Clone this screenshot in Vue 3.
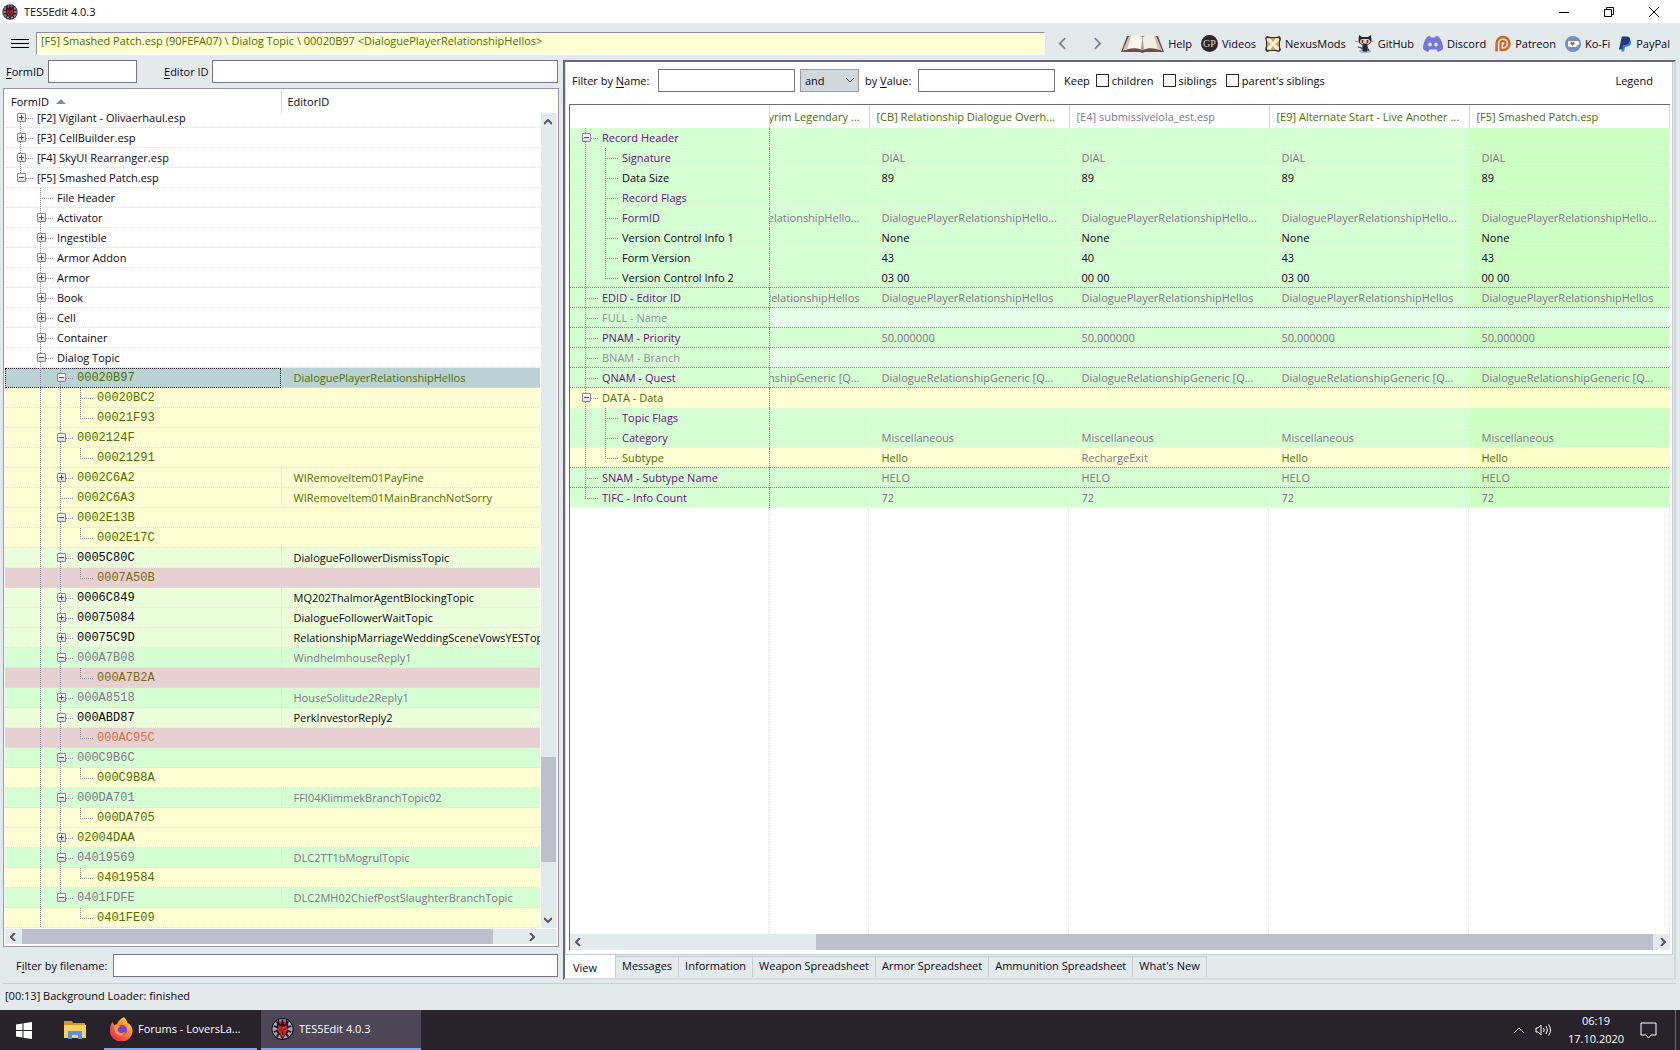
<script setup>
import { ref } from 'vue'

const formId = ref('')
const editorId = ref('')
const fileFilter = ref('')
const nameFilter = ref('')
const valueFilter = ref('')
const joinMode = ref('and')

// g: guide per level (v = line through, t = tee, l = corner, space = empty)
// x: expander state, tone: row colours
const tree = [
  { g: 't', x: '+', a: '[F2] Vigilant - Olivaerhaul.esp' },
  { g: 't', x: '+', a: '[F3] CellBuilder.esp' },
  { g: 't', x: '+', a: '[F4] SkyUI Rearranger.esp' },
  { g: 'l', x: '-', a: '[F5] Smashed Patch.esp' },
  { g: ' t', a: 'File Header' },
  { g: ' t', x: '+', a: 'Activator' },
  { g: ' t', x: '+', a: 'Ingestible' },
  { g: ' t', x: '+', a: 'Armor Addon' },
  { g: ' t', x: '+', a: 'Armor' },
  { g: ' t', x: '+', a: 'Book' },
  { g: ' t', x: '+', a: 'Cell' },
  { g: ' t', x: '+', a: 'Container' },
  { g: ' t', x: '-', a: 'Dialog Topic' },
  { g: ' vt', x: '-', a: '00020B97', b: 'DialoguePlayerRelationshipHellos', tone: 'selected' },
  { g: ' vvt', a: '00020BC2', tone: 'yellow' },
  { g: ' vvl', a: '00021F93', tone: 'yellow' },
  { g: ' vt', x: '-', a: '0002124F', tone: 'yellow' },
  { g: ' vvl', a: '00021291', tone: 'yellow' },
  { g: ' vt', x: '+', a: '0002C6A2', b: 'WIRemoveItem01PayFine', tone: 'yellow' },
  { g: ' vt', a: '0002C6A3', b: 'WIRemoveItem01MainBranchNotSorry', tone: 'yellow' },
  { g: ' vt', x: '-', a: '0002E13B', tone: 'yellow' },
  { g: ' vvl', a: '0002E17C', tone: 'yellow' },
  { g: ' vt', x: '-', a: '0005C80C', b: 'DialogueFollowerDismissTopic', tone: 'lime' },
  { g: ' vvl', a: '0007A50B', tone: 'pink' },
  { g: ' vt', x: '+', a: '0006C849', b: 'MQ202ThalmorAgentBlockingTopic', tone: 'lime' },
  { g: ' vt', x: '+', a: '00075084', b: 'DialogueFollowerWaitTopic', tone: 'lime' },
  { g: ' vt', x: '+', a: '00075C9D', b: 'RelationshipMarriageWeddingSceneVowsYESTopic', tone: 'lime' },
  { g: ' vt', x: '-', a: '000A7B08', b: 'WindhelmhouseReply1', tone: 'green' },
  { g: ' vvl', a: '000A7B2A', tone: 'pink' },
  { g: ' vt', x: '+', a: '000A8518', b: 'HouseSolitude2Reply1', tone: 'green' },
  { g: ' vt', x: '-', a: '000ABD87', b: 'PerkInvestorReply2', tone: 'lime' },
  { g: ' vvl', a: '000AC95C', tone: 'pink orange' },
  { g: ' vt', x: '-', a: '000C9B6C', tone: 'green' },
  { g: ' vvl', a: '000C9B8A', tone: 'yellow' },
  { g: ' vt', x: '-', a: '000DA701', b: 'FFI04KlimmekBranchTopic02', tone: 'green' },
  { g: ' vvl', a: '000DA705', tone: 'yellow' },
  { g: ' vt', x: '+', a: '02004DAA', tone: 'yellow' },
  { g: ' vt', x: '-', a: '04019569', b: 'DLC2TT1bMogrulTopic', tone: 'green' },
  { g: ' vvl', a: '04019584', tone: 'yellow' },
  { g: ' vl', x: '-', a: '0401FDFE', b: 'DLC2MH02ChiefPostSlaughterBranchTopic', tone: 'green' },
  { g: ' v l', a: '0401FE09', tone: 'yellow' },
]

const columns = [
  { t: 'Skyrim Legendary ...', c: 'win' },
  { t: '[CB] Relationship Dialogue Overh...', c: 'win' },
  { t: '[E4] submissivelola_est.esp', c: 'mute' },
  { t: '[E9] Alternate Start - Live Another ...', c: 'win' },
  { t: '[F5] Smashed Patch.esp', c: 'win' },
]

const four = (s) => ['', s, s, s, s]
const five = (s) => [s, s, s, s, s]
const record = [
  { g: 't', x: '-', n: 'Record Header', c: 'same', v: four('') },
  { g: 'vt', n: 'Signature', c: 'same', v: four('DIAL') },
  { g: 'vt', n: 'Data Size', c: 'plain', v: four('89') },
  { g: 'vt', n: 'Record Flags', c: 'same', v: four('') },
  { g: 'vt', n: 'FormID', c: 'same', v: five('DialoguePlayerRelationshipHello...') },
  { g: 'vt', n: 'Version Control Info 1', c: 'plain', v: four('None') },
  { g: 'vt', n: 'Form Version', c: 'plain', v: ['', '43', '40', '43', '43'] },
  { g: 'vl', n: 'Version Control Info 2', c: 'plain', v: ['', '03 00', '00 00', '03 00', '00 00'], dark: true },
  { g: 't', n: 'EDID - Editor ID', c: 'same', v: five('DialoguePlayerRelationshipHellos'), dark: true },
  { g: 't', n: 'FULL - Name', c: 'absent', v: four(''), dark: true },
  { g: 't', n: 'PNAM - Priority', c: 'same', v: four('50.000000'), dark: true },
  { g: 't', n: 'BNAM - Branch', c: 'absent', v: four(''), dark: true },
  { g: 't', n: 'QNAM - Quest', c: 'same', v: five('DialogueRelationshipGeneric [Q...'), dark: true },
  { g: 't', x: '-', n: 'DATA - Data', c: 'conflict', v: four('') },
  { g: 'vt', n: 'Topic Flags', c: 'same', v: four('') },
  { g: 'vt', n: 'Category', c: 'same', v: four('Miscellaneous') },
  { g: 'vl', n: 'Subtype', c: 'conflict', v: ['', 'Hello', 'RechargeExit', 'Hello', 'Hello'], dark: true },
  { g: 't', n: 'SNAM - Subtype Name', c: 'same', v: four('HELO'), dark: true },
  { g: 'l', n: 'TIFC - Info Count', c: 'same', v: four('72') },
]

const tabs = ['View', 'Messages', 'Information', 'Weapon Spreadsheet', 'Armor Spreadsheet', 'Ammunition Spreadsheet', "What's New"]
const guide = (ch) => ({ v: 'gv', t: 'gt', l: 'gl' })[ch] || ''
</script>

<template>
  <div class="screen">
    <header class="titlebar">
      <svg class="appicon" viewBox="0 0 24 24"><circle cx="12" cy="12" r="11.500" fill="#3b3544" /><circle cx="12" cy="12" r="10" fill="#8f919c" /><path d="M12 2v20M3 9l18 6M3 15l18-6M6 4l12 16M18 4L6 20" stroke="#2a2430" stroke-width="2" /><path d="M8 2l1 4 3-2 3 2 1-4 2 6-1 5 1 3-3 2-3 4-3-4-3-2 1-3-1-5z" fill="#2b0f1a" /><path d="M8 8l4 2 4-2 1 5-2 4-3 3-3-3-2-4z" fill="#c21c2c" /><path d="M9 3l1 4M15 3l-1 4" stroke="#a02858" stroke-width="1.500" /><path d="M9 12l2 1M15 12l-2 1M12 14v4" stroke="#2b0c18" stroke-width="1.500" /></svg>
      <span class="apptitle">TES5Edit 4.0.3</span>
      <div class="winbtns">
        <button aria-label="Minimize"><svg viewBox="0 0 12 12"><path d="M1 6.500h10" /></svg></button>
        <button aria-label="Restore"><svg viewBox="0 0 12 12"><path d="M1.500 3.500h7v7h-7zM3.500 3.500v-2h7v7h-2" /></svg></button>
        <button aria-label="Close"><svg viewBox="0 0 12 12"><path d="M1 1l10 10M11 1L1 11" /></svg></button>
      </div>
    </header>

    <nav class="toolbar">
      <button class="burger" aria-label="Menu"><i></i><i></i><i></i></button>
      <div class="address">[F5] Smashed Patch.esp (90FEFA07) \ Dialog Topic \ 00020B97 &lt;DialoguePlayerRelationshipHellos&gt;</div>
      <button class="navbtn" aria-label="Back"><svg viewBox="0 0 10 14"><path d="M8 1L2 7l6 6" /></svg></button>
      <button class="navbtn" aria-label="Forward"><svg viewBox="0 0 10 14"><path d="M2 1l6 6-6 6" /></svg></button>
      <div class="links">
        <a href="#help"><svg width="43" height="18" viewBox="0 0 43 18"><path d="M6 1L0 17h19l2.500 1 2.500-1h19L37 1z" fill="#6b514a" /><path d="M8 1.500C13 0 18 0 21.500 2v13C15 12 8 13 2 15.500z" fill="#f7f4ee" /><path d="M35 1.500C30 0 25 0 21.500 2v13c6-3 13-2 19.500.500z" fill="#f1ede5" /><path d="M21.500 2L20 14.500l1.500.500 1.500-.500z" fill="#a99c92" /><path d="M8 1.500L2 15.500l4-1.200L10 1zM35 1.500l6 14-4-1.200L33 1z" fill="#cdbfb0" /></svg>Help</a>
        <a href="#videos"><svg width="17" height="17" viewBox="0 0 17 17"><circle cx="8.500" cy="8.500" r="8.500" fill="#2c2630" /><text x="8.500" y="12" text-anchor="middle" font-size="10" font-family="Liberation Serif, serif" fill="#e0d4ae">GP</text></svg>Videos</a>
        <a href="#nexus"><svg width="16" height="16" viewBox="0 0 16 16"><path d="M2 0l4 1h5l4-1 1 3-1 3v5l1 3-2 2-4-1H5l-3 1-2-2 1-4V5L0 2z" fill="#3c3033" /><path d="M2 2h12v12H2z" fill="#d99a3c" /><path d="M1.500 2L6 3l2 3 3-4 3.500 1L13 6l-3 2 4 3-.500 3.500L10 13 8 10l-3 4-3-1 1-3 3-2-4-3z" fill="#f6efe2" /></svg>NexusMods</a>
        <a href="#github"><svg width="19" height="18" viewBox="0 0 19 18"><ellipse cx="10" cy="16" rx="6" ry="2" fill="#8fb9d8" /><path d="M4 0l3 2h6l3-2 .500 5c0 4-3 5-6.500 5S3.500 9 3.500 5z" fill="#2b2533" /><rect x="5" y="4" width="10" height="5" rx="2.500" fill="#eccfbd" /><path d="M7.500 5v3M12.500 5v3" stroke="#4a2c30" stroke-width="1.500" /><path d="M8 9h4v7H8zM8 13c-2 1-3-1-5-1M12 12l2 4" fill="#2b2533" stroke="#2b2533" /><path d="M0 6l4 1M19 6l-4 1" stroke="#9d939c" /></svg>GitHub</a>
        <a href="#discord"><svg width="20" height="16" viewBox="0 0 20 16"><path d="M4 1Q6 0 7 0l1 1.500h4L13 0q2 0 3 1 4 5 4 12-2 2-5 3l-1.500-2.500h-7L5 16q-3-1-5-3Q0 6 4 1z" fill="#7277d8" /><ellipse cx="7" cy="8.500" rx="1.700" ry="2" fill="#e9edf3" /><ellipse cx="13" cy="8.500" rx="1.700" ry="2" fill="#e9edf3" /></svg>Discord</a>
        <a href="#patreon"><svg width="16" height="17" viewBox="0 0 16 17"><path d="M1.500 16.500V8.500a6.500 6.500 0 1 1 6.500 6.500q-2 0-3-.800" fill="none" stroke="#d5601c" stroke-width="2.400" /><path d="M5.500 15V8.500a2.500 2.500 0 1 1 2.500 2.500" fill="none" stroke="#d5601c" stroke-width="2" /></svg>Patreon</a>
        <a href="#kofi"><svg width="16" height="16" viewBox="0 0 16 16"><circle cx="8" cy="8" r="8" fill="#6d92c4" /><path d="M3 5h9q2.500 0 2.500 2t-2.500 2.500L11 11H5q-2 0-2-2z" fill="#fff" /><path d="M7.500 9.800L5.400 7.600q-.400-1.600 1-1.600.800 0 1.100.600.300-.600 1.100-.600 1.400 0 1 1.600z" fill="#d8404e" /></svg>Ko-Fi</a>
        <a href="#paypal"><svg width="13" height="16" viewBox="0 0 14 16"><path d="M5 3h6q3 2 1.500 5.500Q11 11 8 11H6.500L5.500 16H2.500z" fill="#2a8fd0" /><path d="M3 0h6q3.500.500 3 4T8 9H4.500L3.500 14H0z" fill="#27387c" /></svg>PayPal</a>
      </div>
    </nav>

    <main class="work">
      <section class="left">
        <div class="idrow">
          <label for="fid"><u>F</u>ormID</label><input id="fid" v-model="formId" class="fid" type="text" />
          <label for="eid" class="eidlab"><u>E</u>ditor ID</label><input id="eid" v-model="editorId" class="grow" type="text" />
        </div>
        <div class="panel">
          <table class="tree">
            <colgroup><col class="c1" /><col /><col class="sb" /></colgroup>
            <thead><tr><th>FormID<svg width="10" height="5" viewBox="0 0 10 5"><path d="M5 0l5 5H0z" fill="#8f8899" /></svg></th><th colspan="2">EditorID</th></tr></thead>
            <tbody>
              <tr v-for="(r, i) in tree" :key="i" :class="[r.tone || 'none', { cut: i === 0, mono: r.tone }]">
                <td class="node"><div class="cell">
                  <span v-for="(ch, k) in r.g" :key="k" class="g" :class="guide(ch)"><button v-if="r.x && k === r.g.length - 1" class="exp" :class="{ plus: r.x === '+' }" :aria-label="r.x === '+' ? 'Expand' : 'Collapse'"></button></span>
                  <span class="txt">{{ r.a }}</span>
                </div></td>
                <td class="ed" :class="{ has: r.b }"><div class="cell"><span class="txt">{{ r.b }}</span></div></td>
                <td v-if="i === 0" class="vbar" :rowspan="tree.length"><div class="vtrack">
                  <svg width="8" height="6" viewBox="0 0 8 6"><path d="M0 5l4-4 4 4" /></svg>
                  <i class="above"></i><i class="vthumb"></i><i class="below"></i>
                  <svg width="8" height="6" viewBox="0 0 8 6"><path d="M0 1l4 4 4-4" /></svg>
                </div></td>
              </tr>
            </tbody>
          </table>
          <div class="hbar lefth">
            <svg width="6" height="8" viewBox="0 0 6 8"><path d="M5 0L1 4l4 4" /></svg><i class="hthumb"></i><i class="rest"></i><svg width="6" height="8" viewBox="0 0 6 8"><path d="M1 0l4 4-4 4" /></svg>
          </div>
        </div>
        <div class="filerow"><label for="ff">F<u>i</u>lter by filename:</label><input id="ff" v-model="fileFilter" class="grow" type="text" /></div>
      </section>

      <section class="right">
        <div class="view">
          <div class="filters">
            <label for="fn" class="fnlab">Filter by <u>N</u>ame:</label><input id="fn" v-model="nameFilter" type="text" />
            <div class="sel"><select v-model="joinMode" aria-label="Combine filters"><option>and</option><option>or</option></select><svg width="10" height="6" viewBox="0 0 10 6"><path d="M1 0l4 4 4-4" /></svg></div>
            <label for="fv" class="fvlab">by <u>V</u>alue:</label><input id="fv" v-model="valueFilter" type="text" />
            <span class="keep">Keep</span>
            <label class="chk"><input type="checkbox" />children</label>
            <label class="chk"><input type="checkbox" />siblings</label>
            <label class="chk"><input type="checkbox" />parent's siblings</label>
            <button class="legend">Legend</button>
          </div>
          <div class="gridbox">
            <table class="rec">
              <colgroup><col class="k0" /><col class="k1" /><col class="k2" /><col class="k2" /><col class="k2" /><col /></colgroup>
              <thead><tr><th></th><th v-for="(c, i) in columns" :key="i" :class="c.c"><div :class="{ part: i === 0 }"><span>{{ c.t }}</span></div></th></tr></thead>
              <tbody>
                <tr v-for="r in record" :key="r.n" :class="[r.c, { dark: r.dark }]">
                  <td class="name"><div class="cell">
                    <span v-for="(ch, k) in r.g" :key="k" class="g" :class="guide(ch)"><button v-if="r.x && k === r.g.length - 1" class="exp" aria-label="Collapse"></button></span>
                    <span class="txt">{{ r.n }}</span>
                  </div></td>
                  <td v-for="(v, i) in r.v" :key="i" class="val"><div class="cell" :class="{ part: i === 0, loser: v === 'RechargeExit' }"><span class="txt">{{ v }}</span></div></td>
                </tr>
              </tbody>
            </table>
            <div class="fill"><i v-for="n in 6" :key="n"></i></div>
            <div class="hbar righth">
              <svg width="6" height="8" viewBox="0 0 6 8"><path d="M5 0L1 4l4 4" /></svg><i class="rest"></i><i class="hthumb"></i><svg width="6" height="8" viewBox="0 0 6 8"><path d="M1 0l4 4-4 4" /></svg>
            </div>
          </div>
        </div>
        <div class="tabs"><button v-for="(t, i) in tabs" :key="t" :class="{ on: i === 0 }">{{ t }}</button></div>
      </section>
    </main>

    <div class="status"><span>[00:13] Background Loader: finished</span></div>

    <footer class="taskbar">
      <button class="start" aria-label="Start"><svg width="16" height="17" viewBox="0 0 16 17"><path d="M0 2.500L6.500 1.500V8H0zM7.500 1.300L16 0v8H7.500zM0 9h6.500v6.500L0 14.500zM7.500 9H16v8l-8.500-1.300z" fill="#fff" /></svg></button>
      <button class="files" aria-label="File Explorer"><svg width="22" height="18" viewBox="0 0 22 18"><path d="M0 0h8l1 2h12v15H0z" fill="#cf9a22" /><path d="M0 4h22v13H0z" fill="#f3d267" /><path d="M4 18v-8h14v8h-4v-4H8v4z" fill="#5f8fe0" /></svg></button>
      <button class="task fox"><svg width="23" height="24" viewBox="0 0 23 24"><defs><linearGradient id="fx" x1="1" y1="0" x2="0.200" y2="1"><stop offset="0" stop-color="#ffe93a" /><stop offset="0.450" stop-color="#ff8a2a" /><stop offset="1" stop-color="#e8255c" /></linearGradient></defs><path d="M14 0c2 2 3 4 3.500 6 3 1 5 4 5 8a11.200 10.500 0 0 1-22.500 0C0 10 1 7 2.500 5L4 8l3-1c1-3 3-5 7-7z" fill="url(#fx)" /><circle cx="12" cy="13" r="5" fill="#7440d8" /><path d="M4 9c3-1 5 0 7 1-3 0-4 2-3 4s4 3 7 1c-1 4-8 5-10 0z" fill="#ff9a2c" /></svg>Forums - LoversLa...</button>
      <button class="task cur"><svg width="23" height="24" viewBox="0 0 24 24"><circle cx="12" cy="12" r="11.500" fill="#17131c" /><circle cx="12" cy="12" r="10.500" fill="#a3a8b4" /><path d="M12 2v20M3 9l18 6M3 15l18-6M6 4l12 16M18 4L6 20" stroke="#221c28" stroke-width="2" /><path d="M8 1l1 5 3-2 3 2 1-5 2 7-1 5 1 3-3 2-3 5-3-5-3-2 1-3-1-5z" fill="#2b0f1a" /><path d="M8 8l4 2 4-2 1 5-2 4-3 4-3-4-2-4z" fill="#e02424" /><path d="M9 3l1 4M15 3l-1 4" stroke="#c02868" stroke-width="1.500" /><path d="M9 12l2 1M15 12l-2 1M12 14v4" stroke="#3a1020" stroke-width="1.500" /></svg>TES5Edit 4.0.3</button>
      <div class="tray">
        <svg width="12" height="7" viewBox="0 0 12 7"><path d="M1 6l5-5 5 5" /></svg>
        <svg width="17" height="14" viewBox="0 0 17 14"><path d="M1 5h2l3-3v10L3 9H1zM8.500 5q1.500 2 0 4M11 3q3 4 0 8M13.500 1.500q4 5.500 0 11" /></svg>
        <div class="clock"><span>06:19</span><span>17.10.2020</span></div>
        <svg width="17" height="17" viewBox="0 0 17 17"><path d="M1 1h15v12h-5l-2.500 3L6 13H1z" /></svg>
        <i class="peek"></i>
      </div>
    </footer>
  </div>
</template>

<style>
body { margin: 0; }
</style>

<style scoped>
* { box-sizing: border-box; }
.screen { min-height: 100vh; display: flex; flex-direction: column; background: #e2eaec; color: #0c0614; font: 11px/16px "Open Sans", "Noto Sans", sans-serif; }
button { border: 0; padding: 0; margin: 0; background: none; font: inherit; color: inherit; }
input[type='text'] { height: 23px; border: 1px solid #79718a; background: #fff; padding: 0 4px; font: inherit; min-width: 0; }
a { color: inherit; text-decoration: none; }
label { white-space: nowrap; }
i { display: block; }
u { text-underline-offset: 2px; }

.titlebar { height: 23px; background: #fff; display: flex; align-items: center; padding: 0 4px 0 2px; }
.appicon { width: 16px; height: 16px; }
.apptitle { margin-left: 6px; }
.winbtns { margin-left: auto; display: flex; }
.winbtns button { width: 45px; height: 20px; display: grid; place-items: center; }
.winbtns svg { width: 12px; height: 12px; fill: none; stroke: #000; }

.toolbar { height: 37px; display: flex; align-items: center; padding: 4px 10px 0 11px; }
.burger { width: 18px; display: grid; gap: 3px; }
.burger i { height: 1px; background: #000; }
.address { flex: 1; height: 23px; margin-left: 7px; padding: 0 5px 3px 4px; line-height: 16px; background: #fdffd2; color: #4c7000; border: 1px solid #fff; border-top-color: #948da0; border-left-color: #948da0; white-space: nowrap; overflow: hidden; }
.navbtn { width: 35px; display: grid; place-items: center; }
.navbtn svg { width: 9px; height: 13px; fill: none; stroke: #85809a; stroke-width: 2; }
.links { display: flex; gap: 9px; margin-left: 6px; }
.links a { display: flex; align-items: center; gap: 4px; }

.work { flex: 1; display: flex; }
.left { flex: 0 0 563px; padding: 0 4px 0 3px; display: flex; flex-direction: column; }
.idrow { display: flex; align-items: center; padding: 0 1px 0 3px; }
.idrow label { width: 42px; }
.idrow .fid { width: 89px; }
.idrow .eidlab { margin-left: 27px; width: 48px; }
.grow { flex: 1; }
.panel { flex: 1; margin-top: 5px; border: 1px solid #9c94aa; background: #fff; padding: 1px; display: flex; flex-direction: column; }
table { border-collapse: collapse; table-layout: fixed; width: 100%; }
th, td { padding: 0; font-weight: 400; text-align: left; }
.c1 { width: 276px; }
.sb { width: 17px; }
.tree th { height: 23px; padding: 0 6px; }
.tree th + th { border-left: 1px solid #d3dadd; }
.tree th svg { margin: 0 0 2px 7px; vertical-align: baseline; }
.cell { height: 20px; display: flex; align-items: center; overflow: hidden; white-space: nowrap; }
.tree td:not(.vbar), .rec td { background: repeating-linear-gradient(90deg, var(--dot) 0 1px, transparent 1px 2px) 0 100% / 100% 1px no-repeat; }
.tree tr { --dot: #dfdfe8; }
.node .cell, .name .cell { padding-left: 12px; }
.cut .cell { height: 15px; align-items: flex-end; }
.cut .txt { line-height: 20px; }
.ed .cell { padding-left: 12px; }
.mono .ed.has { border-left: 1px dotted #dfdfe8; }
.mono .node .txt { font: 12px/16px "Liberation Mono", "DejaVu Sans Mono", monospace; }
.yellow { background: #fdffd2; color: #4c7000; }
.lime { background: #ebffdb; }
.green { background: #d5ffd3; color: #80778a; }
.pink { background: #e6d0d2; color: #7c6a10; }
.pink.orange { color: #cc7348; }
.selected { background: #bad2d4; color: #4c7000; }
.selected .node .cell { outline: 1px dotted #101018; outline-offset: -1px; }

.g { flex: none; position: relative; width: 20px; height: 20px; --v: repeating-linear-gradient(#8c869a 0 1px, transparent 1px 2px); --h: repeating-linear-gradient(90deg, #8c869a 0 1px, transparent 1px 2px); }
.gv { background: var(--v) 3px 0 / 1px 100% no-repeat; }
.gt { background: var(--v) 3px 0 / 1px 100% no-repeat, var(--h) 3px 10px / 13px 1px no-repeat; }
.gl { background: var(--v) 3px 0 / 1px 10px no-repeat, var(--h) 3px 10px / 13px 1px no-repeat; }
.exp { position: absolute; left: 0; top: 5px; width: 9px; height: 9px; border: 1px solid #8b8496; border-radius: 1px; background: linear-gradient(#3d4a96, #3d4a96) 1px 3px / 5px 1px no-repeat, linear-gradient(#fff, #d9dbe4); }
.exp.plus { background: linear-gradient(#3d4a96, #3d4a96) 1px 3px / 5px 1px no-repeat, linear-gradient(#3d4a96, #3d4a96) 3px 1px / 1px 5px no-repeat, linear-gradient(#fff, #d9dbe4); }

.vbar { background: #e2eaec; height: 100%; border-left: 1px solid #fff; }
.vtrack { height: 815px; display: flex; flex-direction: column; align-items: center; padding: 6px 1px 5px 0; }
.above { flex: 632; }
.vthumb { flex: 105; width: 15px; background: #bdc0ca; }
.below { flex: 55; }
.vtrack svg, .hbar svg { flex: none; fill: none; stroke: #5a5264; stroke-width: 2; }
.hbar { height: 16px; display: flex; align-items: center; background: #e2eaec; }
.hthumb { height: 100%; background: #bdc0ca; }
.lefth { margin-top: auto; padding: 0 22px 0 5px; border-bottom: 1px solid #fff; }
.lefth .hthumb { flex: 470; margin-left: 6px; }
.lefth .rest { flex: 36; }
.filerow { display: flex; align-items: center; padding: 7px 1px 3px 13px; }
.filerow label { width: 97px; }

.right { flex: 1; min-width: 0; margin-right: 4px; display: flex; flex-direction: column; border: 2px solid #6d667a; border-right: 2px solid #d0d7db; border-bottom: 2px solid #d7dee1; }
.view { flex: 1; display: flex; flex-direction: column; background: #fff; margin-right: 1px; padding: 7px 2px 4px 3px; border-left: 1px solid #d8dce4; border-right: 1px solid #c6cdd4; border-bottom: 1px solid #c6cdd4; }
.filters { display: flex; align-items: center; padding: 0 17px 0 3px; height: 23px; white-space: nowrap; }
.fnlab { width: 86px; }
.fvlab { width: 53px; }
.filters > input { width: 137px; }
.sel { position: relative; width: 59px; margin: 0 6px 0 5px; }
.sel select { appearance: none; width: 100%; height: 23px; border: 1px solid #9d97a8; border-radius: 0; background: #d2d9dd; padding: 0 4px; font: inherit; color: inherit; }
.sel svg { position: absolute; right: 4px; top: 9px; fill: none; stroke: #5c5668; }
.keep { margin: 0 6px 0 9px; }
.chk { display: flex; align-items: center; gap: 3px; margin-right: 9px; }
.chk input { appearance: none; width: 13px; height: 13px; margin: 0; border: 1px solid #2a2434; background: #fff; }
.legend { margin-left: auto; }
.gridbox { flex: 1; margin-top: 12px; display: flex; flex-direction: column; border-top: 1px solid #6d667a; border-left: 1px solid #6d667a; }
.k0 { width: 199px; }
.k2 { width: 200px; }
.k1 { width: 100px; }
.rec th { height: 23px; border-right: 1px solid #d3dadd; }
.rec th div { padding-left: 7px; white-space: nowrap; overflow: hidden; }
.rec .part { display: flex; justify-content: flex-end; padding: 0 9px 0 0; }
.rec .part span { flex: none; }
.rec th.win { color: #4c7000; }
.rec th.mute { color: #80778a; }
.rec tbody tr { background: #d5ffd3; --dot: #fff; }
.rec tbody tr.dark { --dot: #7f8a86; }
.rec td { border-right: 1px dotted #f0f8f2; }
.rec td.name { border-right: 1px dotted #8c869a; }
.rec .val .cell { padding-left: 12px; }
.rec .val .cell.part { padding-left: 0; }
.rec td:last-child { background-color: #cdffc5; }
.same .name, .same .name .txt { color: #690f82; }
.same .val { color: #80778a; }
.absent .name { color: #958d9e; }
.absent .val { background-color: #e5ffe8; }
.rec .absent td:last-child { background-color: #e0ffe2; }
.rec tbody tr.conflict { background-color: #fdffd2; color: #4c7000; }
.rec .conflict td:last-child { background-color: #fbffc8; }
.loser { color: #80778a; }
.fill { flex: 1; display: grid; grid-template-columns: 199px 100px 200px 200px 200px 1fr; }
.fill i { border-right: 1px dotted #dedee4; }
.righth { padding: 0 4px 0 5px; }
.righth .rest { flex: 235; }
.righth .hthumb { flex: 838; margin-right: 7px; }

.tabs { display: flex; align-items: flex-start; height: 23px; }
.tabs button { height: 21px; margin-top: 1px; padding: 0 6px 2px; border: 1px solid #c6cdd4; border-left: 0; border-bottom: 0; white-space: nowrap; }
.tabs .on { height: 23px; margin-top: 0; padding: 2px 18px 0 8px; background: #fff; border-top: 0; }
.status { height: 30px; padding-top: 3px; margin: 0 4px 0 3px; }
.status span { display: block; border-top: 1px solid #c6cdd4; line-height: 24px; padding-left: 2px; }

.taskbar { height: 40px; display: flex; background: #28232b; color: #fff; }
.start { width: 48px; display: grid; place-items: center; }
.files { width: 54px; display: grid; place-items: center; }
.task { display: flex; align-items: center; gap: 5px; border-bottom: 2px solid #83a3ea; white-space: nowrap; }
.fox { width: 153px; padding-left: 6px; margin-left: 2px; }
.cur { width: 160px; padding-left: 10px; margin-left: 4px; background: #4e4557; }
.tray { margin-left: auto; display: flex; align-items: center; gap: 10px; }
.tray svg { fill: none; stroke: #fff; }
.clock { display: grid; justify-items: center; line-height: 18px; width: 68px; }
.peek { width: 1px; height: 40px; background: #6f6a73; margin: 0 4px 0 8px; }
</style>
